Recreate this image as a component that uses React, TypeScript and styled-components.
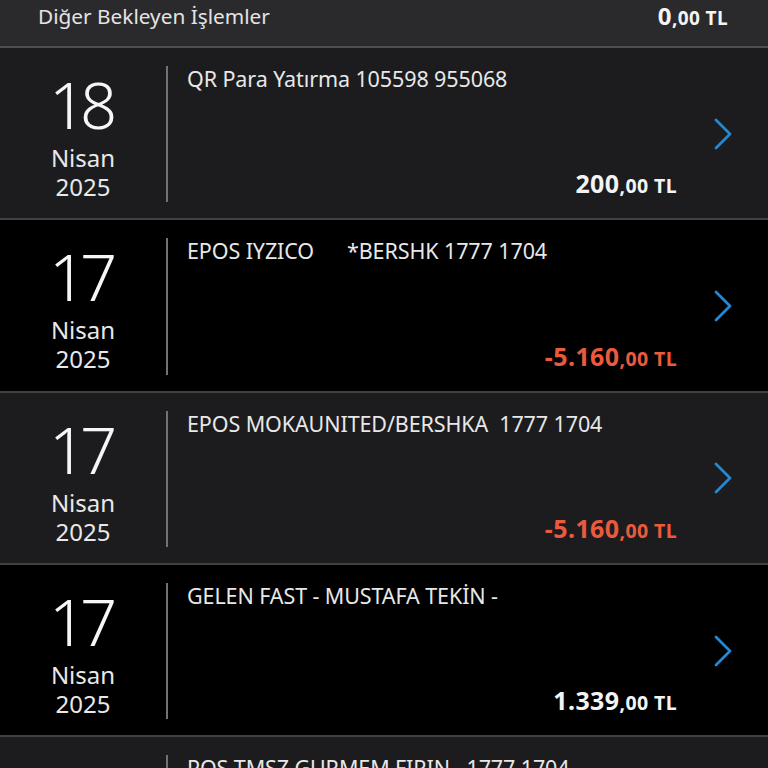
import React from "react";
import styled, { createGlobalStyle } from "styled-components";

const Global = createGlobalStyle`
  html, body { margin: 0; padding: 0; background: #000; }
  body { font-family: "Noto Sans", "Open Sans", sans-serif; color: #f2f2f2; }
`;

const Page = styled.div`
  width: 768px;
  height: 768px;
  overflow: hidden;
  background: #000;
`;

const Header = styled.div`
  display: flex;
  align-items: flex-start;
  justify-content: space-between;
  padding: 3px 39px 0 38px;
  background: #2a2a2c;
  border-bottom: 2px solid #4e4e50;
  box-sizing: content-box;
  height: 43px;
`;

const HeaderTitle = styled.span`
  font-size: 20.8px;
  font-weight: 400;
  line-height: 26px;
  color: #e4e4e4;
`;

const AmountText = styled.span<{ $neg?: boolean }>`
  font-weight: 700;
  letter-spacing: 0.4px;
  color: ${(p) => (p.$neg ? "#ec5a3e" : "#f4f4f4")};
  white-space: nowrap;
`;

const Big = styled.span<{ $size?: number }>`
  font-size: ${(p) => p.$size ?? 25}px;
`;

const Small = styled.span<{ $size?: number }>`
  font-size: ${(p) => p.$size ?? 19.5}px;
`;

const HeaderAmount = styled.div`
  line-height: 26px;
  margin-right: 1px;
`;

const Row = styled.div<{ $dark?: boolean }>`
  height: 170.33px;
  display: flex;
  background: ${(p) => (p.$dark ? "#000" : "#1c1c1e")};
  border-bottom: 2px solid #414143;
  box-sizing: content-box;
`;

const DateCol = styled.div`
  width: 166px;
  display: flex;
  flex-direction: column;
  align-items: center;
  padding-top: 24px;
  box-sizing: border-box;
`;

const Day = styled.div`
  font-size: 65px;
  font-weight: 300;
  line-height: 65px;
  letter-spacing: -6px;
  margin-right: 6px;
  color: #f6f6f6;
`;

const DateLine = styled.div<{ $first?: boolean }>`
  font-size: 24px;
  font-weight: 400;
  line-height: 29px;
  margin-top: ${(p) => (p.$first ? 6 : 0)}px;
  color: #e8e8e8;
`;

const Body = styled.div`
  flex: 1;
  margin: 18px 0 16px 0;
  border-left: 2px solid #727274;
  padding-left: 19px;
  display: flex;
  flex-direction: column;
  justify-content: space-between;
`;

const Title = styled.div`
  font-size: 21.5px;
  font-weight: 400;
  line-height: 26px;
  color: #e8e8e8;
  white-space: pre;
  letter-spacing: -0.1px;
`;

const Amount = styled.div`
  text-align: right;
  line-height: 26px;
  padding-bottom: 2px;
`;

const ChevronCol = styled.div`
  width: 91px;
  display: flex;
  align-items: center;
  justify-content: center;
  padding-top: 1px;
`;

const Chevron = () => (
  <svg width="20" height="32" viewBox="0 0 20 32" fill="none">
    <polyline
      points="3,2 17,16 3,30"
      stroke="#2488d2"
      strokeWidth="2.8"
      strokeLinecap="round"
      strokeLinejoin="round"
    />
  </svg>
);

type Tx = { day: string; title: string; int: string; dec: string; neg?: boolean };

const txs: Tx[] = [
  { day: "18", title: "QR Para Yatırma 105598 955068", int: "200", dec: ",00 TL" },
  { day: "17", title: "EPOS IYZICO      *BERSHK 1777 1704", int: "-5.160", dec: ",00 TL", neg: true },
  { day: "17", title: "EPOS MOKAUNITED/BERSHKA  1777 1704", int: "-5.160", dec: ",00 TL", neg: true },
  { day: "17", title: "GELEN FAST - MUSTAFA TEKİN -", int: "1.339", dec: ",00 TL" },
  { day: "17", title: "POS TMSZ GURMEM FIRIN   1777 1704", int: "-250", dec: ",00 TL", neg: true },
];

export default function App() {
  return (
    <Page>
      <Global />
      <Header>
        <HeaderTitle>Diğer Bekleyen İşlemler</HeaderTitle>
        <HeaderAmount>
          <AmountText>
            <Big $size={24}>0</Big>
            <Small $size={19}>,00 TL</Small>
          </AmountText>
        </HeaderAmount>
      </Header>
      {txs.map((t, i) => (
        <Row key={i} $dark={i % 2 === 1}>
          <DateCol>
            <Day>{t.day}</Day>
            <DateLine $first>Nisan</DateLine>
            <DateLine>2025</DateLine>
          </DateCol>
          <Body>
            <Title>{t.title}</Title>
            <Amount>
              <AmountText $neg={t.neg}>
                <Big>{t.int}</Big>
                <Small>{t.dec}</Small>
              </AmountText>
            </Amount>
          </Body>
          <ChevronCol>
            <Chevron />
          </ChevronCol>
        </Row>
      ))}
    </Page>
  );
}
